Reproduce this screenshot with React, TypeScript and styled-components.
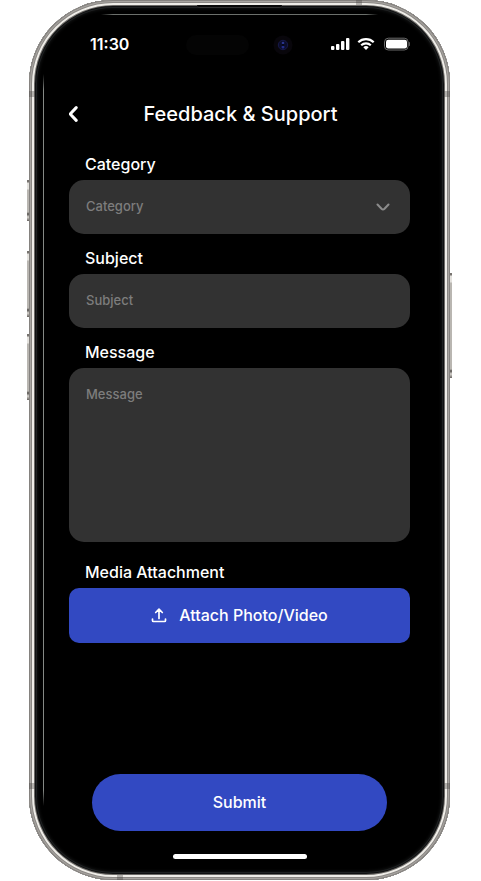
import React from "react";
import styled, { createGlobalStyle } from "styled-components";

const GlobalStyle = createGlobalStyle`
  * { box-sizing: border-box; }
  body { margin: 0; background: #fff; font-family: Inter, "Liberation Sans", sans-serif; }
  button, input, select, textarea { font: inherit; border: 0; margin: 0; outline-offset: 2px; }
`;

const Stage = styled.main`
  display: flex;
  min-height: 100vh;
  padding: 0 31px 1px 29px;
`;

const Phone = styled.div`
  position: relative;
  display: flex;
  flex: 1;
  flex-direction: column;
  padding: 30px 40px 21px;
  border-radius: 84px;
  background: #000;
  color: #fff;
  box-shadow:
    inset 0 0 0 1px #85827f,
    inset 0 0 0 2px #a8a5a1,
    inset 0 0 0 3px #8b8885,
    inset 0 0 0 5px #efede8,
    inset 0 0 0 6px #6b6966,
    inset 0 0 0 7px #101112,
    inset 0 0 0 8px #1f2122,
    inset 0 0 3px 9px #101111;
`;

const SideKey = styled.span<{ $side: "left" | "right"; $top: number; $length: number }>`
  position: absolute;
  top: ${(p) => p.$top}px;
  ${(p) => p.$side}: -2px;
  width: 2px;
  height: ${(p) => p.$length}px;
  background: linear-gradient(#77736f 0 2px, #e4e2de 3px 9px, #b9b6b1 10px calc(100% - 9px), #55524f calc(100% - 7px), #d8d5d0 calc(100% - 4px), #66625f 100%);
`;

const Seam = styled.span<{ $edge: "left" | "right" | "top" | "bottom"; $near: "start" | "end" }>`
  position: absolute;
  background: rgba(70, 66, 62, 0.35);
  ${(p) =>
    p.$edge === "left" || p.$edge === "right"
      ? `${p.$edge}: 0; width: 6px; height: 6px; ${p.$near === "start" ? "top: 91px" : "bottom: 91px"};`
      : `${p.$edge}: 0; width: 6px; height: 5px; ${p.$near === "start" ? "left: 88px" : "right: 88px"};`}
`;

const TopGlint = styled.span`
  position: absolute;
  top: 14px;
  left: 72px;
  right: 72px;
  height: 1px;
  background: linear-gradient(90deg, transparent, #6c706c 12px calc(100% - 12px), transparent);
`;

const SideGlint = styled.span`
  position: absolute;
  top: 74px;
  bottom: 74px;
  left: 14px;
  width: 1px;
  background: linear-gradient(transparent, #858985 16px calc(100% - 16px), transparent);
`;

const Speaker = styled.span`
  position: absolute;
  top: 5px;
  left: 168px;
  right: 168px;
  height: 3px;
  border-radius: 0 0 3px 3px;
  border-bottom: 1px solid #303030;
  background: #080808;
`;

const Camera = styled.svg`
  position: absolute;
  top: 35px;
  left: calc(50% + 33px);
  width: 20px;
  height: 20px;
`;

const Island = styled.span`
  position: absolute;
  top: 35px;
  left: calc(50% - 54px);
  width: 63px;
  height: 20px;
  border-radius: 10px;
  background: #040404;
`;

const StatusBar = styled.div`
  display: flex;
  align-items: center;
  justify-content: space-between;
  height: 28px;
  padding: 0 0 0 21px;
`;

const Clock = styled.time`
  font-size: 16px;
  line-height: 20px;
  font-weight: 600;
`;

const StatusIcons = styled.svg`
  width: 80px;
  height: 14px;
`;

const Header = styled.header`
  display: grid;
  grid-template-columns: 24px 1fr 22px;
  align-items: center;
  margin: 42px 0 26px;
  height: 28px;
`;

const BackButton = styled.button`
  display: flex;
  align-items: center;
  height: 28px;
  padding: 0;
  background: none;
  color: #fff;
  cursor: pointer;
`;

const Title = styled.h1`
  margin: 0;
  font-size: 20px;
  line-height: 28px;
  font-weight: 500;
  text-align: center;
  white-space: nowrap;
`;

const Form = styled.form`
  display: flex;
  flex: 1;
  flex-direction: column;
`;

const Field = styled.div<{ $gap?: number }>`
  display: flex;
  flex-direction: column;
  gap: 6px;
  margin-bottom: ${(p) => p.$gap ?? 14}px;
`;

const Label = styled.label`
  padding-left: 16px;
  font-size: 16px;
  line-height: 20px;
  font-weight: 500;
`;

const controlStyle = `
  display: block;
  width: 100%;
  border-radius: 15px;
  background: #323232;
  font-size: 13px;
  line-height: 18px;
  font-weight: 500;
`;

const SelectWrap = styled.div`
  display: grid;
  align-items: center;
  & > * { grid-area: 1 / 1; }
`;

const Select = styled.select`
  && {
    ${controlStyle}
    height: 54px;
    padding: 0 48px 2px 17px;
    appearance: none;
    color: #7d7d7d;
  }
`;

const Chevron = styled.svg`
  justify-self: end;
  width: 14px;
  height: 8px;
  margin-right: 20px;
  pointer-events: none;
`;

const Input = styled.input`
  && {
    ${controlStyle}
    height: 54px;
    padding: 0 17px 2px;
    color: #fff;
  }
  &::placeholder { color: #7d7d7d; opacity: 1; }
`;

const TextArea = styled.textarea`
  && {
    ${controlStyle}
    height: 174px;
    padding: 17px;
    resize: none;
    color: #fff;
  }
  &::placeholder { color: #7d7d7d; opacity: 1; }
`;

const ActionButton = styled.button`
  display: flex;
  align-items: center;
  justify-content: center;
  background: #3249c2;
  color: #fff;
  cursor: pointer;
  && {
    padding: 0 0 2px;
    font-size: 16px;
    line-height: 20px;
    font-weight: 500;
  }
`;

const AttachButton = styled(ActionButton)`
  gap: 12px;
  height: 55px;
  border-radius: 10px;
`;

const SubmitButton = styled(ActionButton)`
  height: 57px;
  border-radius: 29px;
  && { margin: auto 23px 0; }
`;

const HomeIndicator = styled.div`
  align-self: center;
  width: 134px;
  height: 5px;
  margin-top: 23px;
  border-radius: 3px;
  background: #fff;
`;

export default function App() {
  return (
    <>
      <GlobalStyle />
      <Stage>
        <Phone>
          <SideKey $side="left" $top={180} $length={41} />
          <SideKey $side="left" $top={251} $length={66} />
          <SideKey $side="left" $top={334} $length={66} />
          <SideKey $side="right" $top={273} $length={105} />
          <Seam $edge="left" $near="start" />
          <Seam $edge="right" $near="start" />
          <Seam $edge="left" $near="end" />
          <Seam $edge="right" $near="end" />
          <Seam $edge="top" $near="end" />
          <Seam $edge="bottom" $near="start" />
          <TopGlint />
          <SideGlint />
          <Speaker />
          <Island />
          <Camera viewBox="0 0 20 20" aria-hidden="true">
            <circle cx="10" cy="10" r="9.5" fill="#08060b" />
            <circle cx="10" cy="10" r="4.7" fill="#0b0d2a" stroke="#17194a" />
            <circle cx="10" cy="8" r="1.3" fill="#29358c" />
            <circle cx="10" cy="12" r="1.5" fill="#222c86" />
            <circle cx="10" cy="10" r="1" fill="#03040f" />
          </Camera>

          <StatusBar>
            <Clock>11:30</Clock>
            <StatusIcons viewBox="0 0 80 14" aria-label="Signal, Wi-Fi and battery" role="img">
              <g fill="#fff">
                <rect x="1" y="9" width="3.4" height="4" rx="1" />
                <rect x="6" y="7" width="3.4" height="6" rx="1" />
                <rect x="11" y="4" width="3.4" height="9" rx="1" />
                <rect x="16" y="1" width="3.4" height="12" rx="1" />
              </g>
              <g fill="none" stroke="#fff" strokeWidth="2.2">
                <path d="M28.3 5.2a11 11 0 0 1 15.4 0" />
                <path d="M31.2 8.3a7 7 0 0 1 9.6 0" />
              </g>
              <path d="M33.3 10.3a4 4 0 0 1 5.4 0L36 13z" fill="#fff" />
              <rect x="54.5" y="1.2" width="23.6" height="11.8" rx="3.8" fill="none" stroke="#6b6b6b" />
              <rect x="56" y="2.7" width="21" height="8.8" rx="2.2" fill="#fff" />
              <path d="M79.3 5.2v3.8c1-.6 1-3.2 0-3.8" fill="#6b6b6b" stroke="#6b6b6b" strokeWidth=".5" />
            </StatusIcons>
          </StatusBar>

          <Header>
            <BackButton type="button" aria-label="Back">
              <svg width="10" height="18" viewBox="0 0 10 18" fill="none" stroke="currentColor" strokeWidth="3" strokeLinecap="round" strokeLinejoin="round">
                <path d="M7.2 2.6 1.2 9l6 6.400" />
              </svg>
            </BackButton>
            <Title>Feedback &amp; Support</Title>
          </Header>

          <Form onSubmit={(e) => e.preventDefault()}>
            <Field>
              <Label htmlFor="category">Category</Label>
              <SelectWrap>
                <Select id="category" defaultValue="">
                  <option value="">Category</option>
                </Select>
                <Chevron viewBox="0 0 14 8" fill="none" stroke="#8c8c8c" strokeWidth="2" strokeLinecap="round" strokeLinejoin="round" aria-hidden="true">
                  <path d="m1.5 1.5 4 4.200q1.500 1.500 3 0l4-4.200" />
                </Chevron>
              </SelectWrap>
            </Field>
            <Field>
              <Label htmlFor="subject">Subject</Label>
              <Input id="subject" type="text" placeholder="Subject" />
            </Field>
            <Field $gap={20}>
              <Label htmlFor="message">Message</Label>
              <TextArea id="message" placeholder="Message" />
            </Field>
            <Field>
              <Label htmlFor="media">Media Attachment</Label>
              <AttachButton id="media" type="button">
                <svg width="16" height="16" viewBox="0 0 16 16" fill="none" stroke="currentColor" strokeWidth="1.7" strokeLinecap="round" strokeLinejoin="round" aria-hidden="true">
                  <path d="M8 11.5V2.3M4.7 5.5 8 2.2l3.3 3.3M1.500 12v1.500q0 1 1 1h11q1 0 1-1V12" />
                </svg>
                Attach Photo/Video
              </AttachButton>
            </Field>
            <SubmitButton type="submit">Submit</SubmitButton>
          </Form>
          <HomeIndicator />
        </Phone>
      </Stage>
    </>
  );
}
